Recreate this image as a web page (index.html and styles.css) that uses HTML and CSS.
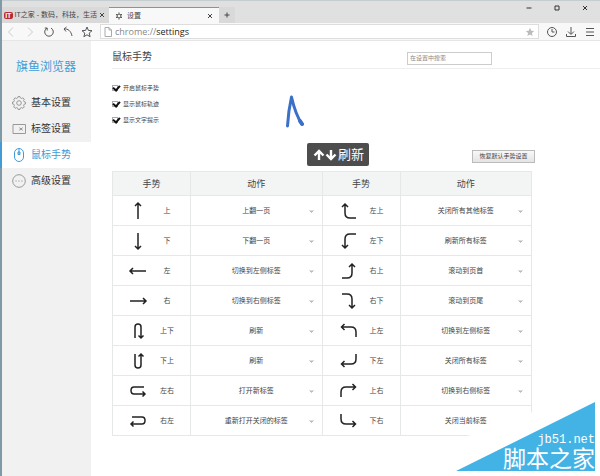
FILE: index.html
```html
<!DOCTYPE html>
<html lang="zh-CN">
<head>
<meta charset="utf-8">
<title>设置</title>
<link rel="stylesheet" href="styles.css">
</head>
<body>
<div class="window">
  <header class="titlebar">
    <nav class="tabs">
      <a class="tab" href="#home"><span class="favicon">IT</span><span class="tab-name">IT之家 - 数码，科技，生活</span><svg class="close" viewBox="0 0 6 6"><path d="M1 1l4 4M5 1L1 5"/></svg></a>
      <a class="tab tab-active" href="#settings"><svg class="gear" viewBox="0 0 8 8"><circle cx="4" cy="4" r="2"/><path d="M4 .5v1M4 6.500v1M1 2.200l.9.600M6.100 5.200l.9.600M1 5.800l.9-.6M6.100 2.800L7 2.200"/></svg><span class="tab-name">设置</span><svg class="close" viewBox="0 0 6 6"><path d="M1 1l4 4M5 1L1 5"/></svg></a>
      <button class="new-tab" type="button" aria-label="新标签"><svg viewBox="0 0 6 6"><path d="M3 .5v5M.5 3h5"/></svg></button>
    </nav>
    <div class="controls">
      <button type="button" aria-label="最小化"><svg viewBox="0 0 6 6"><path d="M.5 3h5"/></svg></button>
      <button type="button" aria-label="最大化"><svg viewBox="0 0 6 6"><path d="M1 1h4v4H1z"/></svg></button>
      <button type="button" aria-label="关闭"><svg viewBox="0 0 6 6"><path d="M1 1l4 4M5 1L1 5"/></svg></button>
    </div>
  </header>

  <div class="toolbar">
    <button class="faint" type="button" aria-label="后退"><svg viewBox="0 0 12 12"><path d="M8 1.500L3.500 6 8 10.500"/></svg></button>
    <button class="faint" type="button" aria-label="前进"><svg viewBox="0 0 12 12"><path d="M4 1.500L8.500 6 4 10.500"/></svg></button>
    <button type="button" aria-label="刷新"><svg viewBox="0 0 12 12"><path d="M4 2.100A4.300 4.300 0 1 0 8 2.100M1.800 2H4.200v2.500"/></svg></button>
    <button type="button" aria-label="撤销"><svg viewBox="0 0 12 12"><path d="M2 3c4-.5 7 2 8 7M4.500 1L2 3l2 2.500"/></svg></button>
    <button type="button" aria-label="收藏夹"><svg viewBox="0 0 12 12"><path d="M6 1l1.400 3.400 3.600.3-2.800 2.400.9 3.600L6 8.800l-3.100 1.900.9-3.600L1 4.700l3.600-.3z"/></svg></button>
    <label class="address">
      <svg class="page-icon" viewBox="0 0 8 10"><path d="M1 .5h4L7.500 3v6.500H1zM5 .5V3h2.500"/></svg>
      <span class="scheme">chrome://</span>
      <input type="text" value="settings" aria-label="地址">
      <svg class="star" viewBox="0 0 12 12"><path d="M6 1l1.500 3.400 3.600.3-2.800 2.500.9 3.700L6 8.900l-3.200 2 .9-3.700L.9 4.700l3.600-.3z"/></svg>
    </label>
    <div class="tools">
      <button type="button" aria-label="历史"><svg viewBox="0 0 12 12"><circle cx="6" cy="6" r="4.500"/><path d="M6 3v3h2.500"/></svg></button>
      <button type="button" aria-label="下载"><svg viewBox="0 0 12 12"><path d="M6 1v7M3 5.500l3 3 3-3M1.500 8v2.500h9V8"/></svg></button>
      <button type="button" aria-label="菜单"><svg viewBox="0 0 12 12"><path d="M2 2.500h8M2 6h8M2 9.500h8"/></svg></button>
    </div>
  </div>

  <div class="content">
    <aside class="sidebar">
      <h1>旗鱼浏览器</h1>
      <nav>
        <a class="item" href="#basic"><svg viewBox="0 0 14 14"><circle cx="7" cy="7" r="2.300"/><path d="M5.700 1.900L6 .6h2l.3 1.300 1.400.6L10.900 1.800l1.400 1.400-.7 1.200.5 1.300 1.300.3v2l-1.300.3-.5 1.400.7 1.200-1.400 1.400-1.200-.7-1.400.5L8 13.400H6l-.3-1.300-1.400-.5-1.200.7-1.400-1.400.7-1.200-.5-1.400L.6 8V6l1.300-.3.5-1.300-.7-1.200 1.400-1.400 1.200.7z"/></svg><span>基本设置</span></a>
        <a class="item" href="#tabs"><svg viewBox="0 0 14 14"><path d="M1 2.500h12.500v9H1z"/><path d="M7.500 5.500l3 3M10.500 5.500l-3 3M7.500 7h3"/></svg><span>标签设置</span></a>
        <a class="item item-active" href="#gesture"><svg viewBox="0 0 14 14"><rect x="2.500" y=".5" width="9" height="13" rx="4.500"/><path d="M7 1v5M6 4h2v2.500H6z"/></svg><span>鼠标手势</span></a>
        <a class="item" href="#advanced"><svg viewBox="0 0 14 14"><circle cx="7" cy="7" r="6.300"/><path d="M3.500 7h1.200M6.400 7h1.200M9.300 7h1.200"/></svg><span>高级设置</span></a>
      </nav>
    </aside>

    <main>
      <div class="heading">
        <h2>鼠标手势</h2>
        <input type="search" placeholder="在设置中搜索" aria-label="在设置中搜索">
      </div>
      <section class="panel">
        <div class="options">
          <label><input type="checkbox" checked>开启鼠标手势</label>
          <label><input type="checkbox" checked>显示鼠标轨迹</label>
          <label><input type="checkbox" checked>显示文字提示</label>
        </div>
        <svg class="trace" viewBox="0 0 20 36"><path d="M3.500 32C4 23 5 14 7.500 3 10 14 13 23 18 30"/><path class="trace-end" d="M16 27l2 3"/></svg>
        <div class="hint"><svg viewBox="0 0 24 12"><path d="M6 11V2M1.500 6.500L6 2l4.500 4.500M18 1v9M13.500 5.500L18 10l4.500-4.500"/></svg><span>刷新</span></div>
        <button class="reset" type="button">恢复默认手势设置</button>
        <table>
          <thead><tr><th class="g">手势</th><th>动作</th><th class="g">手势</th><th>动作</th></tr></thead>
          <tbody>
            <tr>
              <td><div class="gesture"><svg viewBox="0 0 20 20"><path d="M10 18V2M7 5l3-3 3 3"/></svg><span>上</span></div></td>
              <td><select aria-label="上"><option>上翻一页</option></select></td>
              <td><div class="gesture"><svg viewBox="0 0 20 20"><path d="M18 17h-6q-5 0-5-5V3M4 6l3-3 3 3"/></svg><span>左上</span></div></td>
              <td><select aria-label="左上"><option>关闭所有其他标签</option></select></td>
            </tr>
            <tr>
              <td><div class="gesture"><svg viewBox="0 0 20 20"><path d="M10 2v16M7 15l3 3 3-3"/></svg><span>下</span></div></td>
              <td><select aria-label="下"><option>下翻一页</option></select></td>
              <td><div class="gesture"><svg viewBox="0 0 20 20"><path d="M18 3h-6q-5 0-5 5v9M4 14l3 3 3-3"/></svg><span>左下</span></div></td>
              <td><select aria-label="左下"><option>刷新所有标签</option></select></td>
            </tr>
            <tr>
              <td><div class="gesture"><svg viewBox="0 0 20 20"><path d="M18 10H2M5 7l-3 3 3 3"/></svg><span>左</span></div></td>
              <td><select aria-label="左"><option>切换到左侧标签</option></select></td>
              <td><div class="gesture"><svg viewBox="0 0 20 20"><path d="M4 17h5q5 0 5-5V3M11 6l3-3 3 3"/></svg><span>右上</span></div></td>
              <td><select aria-label="右上"><option>滚动到页首</option></select></td>
            </tr>
            <tr>
              <td><div class="gesture"><svg viewBox="0 0 20 20"><path d="M2 10h16M15 7l3 3-3 3"/></svg><span>右</span></div></td>
              <td><select aria-label="右"><option>切换到右侧标签</option></select></td>
              <td><div class="gesture"><svg viewBox="0 0 20 20"><path d="M4 3h5q5 0 5 5v9M11 14l3 3 3-3"/></svg><span>右下</span></div></td>
              <td><select aria-label="右下"><option>滚动到页尾</option></select></td>
            </tr>
            <tr>
              <td><div class="gesture"><svg viewBox="0 0 20 20"><path d="M7 17V6q0-3 3-3t3 3v11M10.500 14.500L13 17l2.500-2.500"/></svg><span>上下</span></div></td>
              <td><select aria-label="上下"><option>刷新</option></select></td>
              <td><div class="gesture"><svg viewBox="0 0 20 20"><path d="M18 16v-5q0-5-5-5H3.500M6.500 3l-3 3 3 3"/></svg><span>上左</span></div></td>
              <td><select aria-label="上左"><option>切换到左侧标签</option></select></td>
            </tr>
            <tr>
              <td><div class="gesture"><svg viewBox="0 0 20 20"><path d="M7 3v11q0 3 3 3t3-3V3M10.500 5.500L13 3l2.500 2.500"/></svg><span>下上</span></div></td>
              <td><select aria-label="下上"><option>刷新</option></select></td>
              <td><div class="gesture"><svg viewBox="0 0 20 20"><path d="M18 3v5q0 5-5 5H3.500M6.500 10l-3 3 3 3"/></svg><span>下左</span></div></td>
              <td><select aria-label="下左"><option>关闭所有标签</option></select></td>
            </tr>
            <tr>
              <td><div class="gesture"><svg viewBox="0 0 20 20"><path d="M16 6H6q-3 0-3 3.500t3 3.500h11M14.500 10.500L17 13l-2.500 2.500"/></svg><span>左右</span></div></td>
              <td><select aria-label="左右"><option>打开新标签</option></select></td>
              <td><div class="gesture"><svg viewBox="0 0 20 20"><path d="M3 16v-5q0-5 5-5h9.500M14.500 3l3 3-3 3"/></svg><span>上右</span></div></td>
              <td><select aria-label="上右"><option>切换到右侧标签</option></select></td>
            </tr>
            <tr>
              <td><div class="gesture"><svg viewBox="0 0 20 20"><path d="M4 6h10q3 0 3 3.500t-3 3.500H3M5.500 10.500L3 13l2.500 2.500"/></svg><span>右左</span></div></td>
              <td><select aria-label="右左"><option>重新打开关闭的标签</option></select></td>
              <td><div class="gesture"><svg viewBox="0 0 20 20"><path d="M3 3v5q0 5 5 5h9.500M14.500 10l3 3-3 3"/></svg><span>下右</span></div></td>
              <td><select class="plain" aria-label="下右"><option>关闭当前标签</option></select></td>
            </tr>
          </tbody>
        </table>
      </section>
    </main>
  </div>
  <div class="badge"><svg viewBox="0 0 139 69" preserveAspectRatio="none"><path class="fade" d="M6 35l33-7 15-12 23-6v25z"/><path d="M0 69L139 0v69z"/></svg><span class="site">jb51.net</span><span class="site-name">脚本之家</span></div>
</div>
</body>
</html>
```
FILE: styles.css
```css
* { box-sizing: border-box; }
body {
  margin: 0;
  font: 8px/12px "Liberation Sans", "Noto Sans CJK SC", sans-serif;
  color: #444;
  background: #fff;
}
button, input, select { font: inherit; color: inherit; }
button { padding: 0; border: 0; background: none; }
a { color: inherit; text-decoration: none; }
svg { display: block; flex: none; fill: none; stroke: currentColor; stroke-width: 1; }

.window {
  position: relative;
  display: flex;
  flex-direction: column;
  min-height: 100vh;
  border-left: 2px solid #7f9aa6;
}

.titlebar {
  display: flex;
  justify-content: space-between;
  height: 23px;
  background: #e0e0e0;
  border-top: 1px solid #c4cdd0;
}
.tabs { display: flex; align-items: flex-end; }
.tab {
  display: flex;
  align-items: center;
  gap: 4px;
  width: 107px;
  height: 16px;
  padding: 0 4px 0 2px;
  background: #d9d9d9;
  font-size: 7px;
}
.tab-active {
  width: 110px;
  padding: 0 6px;
  background: #f8f8f8;
  border-top: 1px solid #4aa7dc;
}
.tab:first-child { gap: 2px; }
.tab-name { flex: 1; white-space: nowrap; }
.favicon {
  width: 9px;
  height: 7px;
  border-radius: 2px;
  background: #b92b34;
  color: #fff;
  font-size: 7px;
  font-weight: bold;
  line-height: 7px;
  text-align: center;
}
.close, .new-tab svg, .controls svg { width: 6px; height: 6px; }
.gear { width: 8px; height: 8px; }
.new-tab { width: 16px; height: 16px; padding: 0 5px; background: #d9d9d9; }
.controls { display: flex; gap: 22px; padding: 4px 12px 0 0; height: 10px; color: #333; }

.toolbar {
  display: flex;
  align-items: center;
  gap: 7px;
  height: 18px;
  padding: 0 4px 0 3px;
  background: #f8f8f8;
  border-bottom: 1px solid #e6e6e6;
  color: #555;
}
.toolbar button svg { width: 12px; height: 12px; }
.toolbar .faint { color: #ccc; }
.address {
  flex: 1;
  display: flex;
  align-items: center;
  height: 15px;
  padding: 0 3px;
  border: 1px solid #ddd;
  background: #fff;
  font: 9px/13px "Open Sans", sans-serif;
}
.page-icon { width: 8px; height: 10px; margin-right: 3px; color: #aaa; }
.scheme { color: #888; }
.address input { flex: 1; min-width: 0; height: 13px; padding: 0; border: 0; outline: 0; background: none; color: #222; }
.star { width: 10px; height: 10px; color: #bbb; fill: currentColor; stroke: none; }
.tools { display: flex; gap: 7px; }

.content { flex: 1; display: flex; }
.sidebar { width: 89px; background: #f1f1f1; }
h1 {
  margin: 0;
  padding: 16px 0 13px 14px;
  color: #429bd5;
  font-size: 12px;
  font-weight: normal;
  line-height: 20px;
}
.item {
  display: flex;
  align-items: center;
  gap: 5px;
  height: 26px;
  padding-left: 10px;
  font-size: 10px;
  color: #333;
}
.item svg { width: 14px; height: 14px; color: #999; stroke-width: 1; }
.item-active { background: #fff; color: #429bd5; box-shadow: -2px 0 #429bd5; }
.item-active svg { color: #429bd5; }

main { flex: 1; min-width: 0; padding-left: 21px; }
.heading {
  display: flex;
  justify-content: space-between;
  align-items: center;
  height: 28px;
  padding: 5px 108px 0 0;
  border-bottom: 1px solid #eee;
}
h2 { margin: 0; font-size: 10px; font-weight: normal; }
.heading input {
  width: 85px;
  height: 13px;
  margin-top: 2px;
  padding: 0 2px;
  border: 1px solid #ccc;
  outline: 0;
  background: #fff;
  font-size: 6px;
  appearance: none;
}
.heading input::placeholder { color: #888; }

.panel { position: relative; padding: 11px 68px 0 0; }
.options label { display: flex; align-items: center; gap: 5px; height: 16px; font-size: 6px; }
.options input {
  position: relative;
  width: 6px;
  height: 6px;
  margin: 0;
  border: 1px solid #aaa;
  appearance: none;
  background: #fff;
}
.options input::after {
  content: "";
  position: absolute;
  left: 1px;
  top: -2px;
  width: 3px;
  height: 5px;
  border: solid #111;
  border-width: 0 2px 2px 0;
  transform: rotate(40deg);
}
.trace {
  position: absolute;
  left: 172px;
  top: 25px;
  width: 20px;
  height: 36px;
  color: #3a70c8;
  stroke-width: 3;
  stroke-linecap: round;
  stroke-linejoin: round;
}
.trace-end { stroke-width: 4; }
.hint {
  position: absolute;
  left: 195px;
  top: 74px;
  display: flex;
  align-items: center;
  gap: 1px;
  height: 23px;
  padding: 0 5px 0 6px;
  border-radius: 2px;
  background: #4d4d4d;
  color: #fff;
  font-size: 13px;
}
.hint svg { width: 24px; height: 12px; stroke-width: 2.4; }
.reset {
  display: block;
  margin: 22px -3px 8px auto;
  height: 13px;
  width: 63px;
  border: 1px solid #bbb;
  background: linear-gradient(#f8f8f8, #e4e4e4);
  font-size: 6px;
  line-height: 11px;
  white-space: nowrap;
}

table { width: 100%; border-collapse: collapse; table-layout: fixed; }
th, td { padding: 0; border: 1px solid #e6e8e8; }
th { height: 24px; background: #f3f5f5; font-size: 9px; font-weight: normal; }
.g { width: 78px; }
td { height: 30px; font-size: 7px; }
.gesture { display: flex; align-items: center; padding-left: 15px; }
.gesture svg { width: 20px; height: 20px; color: #222; stroke-width: 1.5; }
.gesture span { flex: 1; padding-right: 4px; text-align: center; }
select {
  display: block;
  width: 100%;
  height: 28px;
  padding: 0;
  border: 0;
  outline: 0;
  appearance: none;
  text-align: center;
  text-align-last: center;
  background:
    linear-gradient(#ddd, #ddd) right 8px top 13px / 5px 1px no-repeat,
    linear-gradient(#bbb, #bbb) right 9px top 14px / 3px 1px no-repeat,
    linear-gradient(#ccc, #ccc) right 10px top 15px / 1px 1px no-repeat;
}
.plain { background: none; }

.badge {
  position: absolute;
  right: 5px;
  bottom: 5px;
  display: flex;
  flex-direction: column;
  align-items: flex-end;
  justify-content: flex-end;
  width: 139px;
  height: 69px;
  color: #fff;
}
.badge svg { position: absolute; inset: 0; width: 100%; height: 100%; fill: #43b3e5; stroke: none; }
.badge .fade { fill: #fff; }
.site { position: relative; font: 12px/14px "Liberation Mono", monospace; }
.site-name { position: relative; font-size: 23px; line-height: 24px; }
```
